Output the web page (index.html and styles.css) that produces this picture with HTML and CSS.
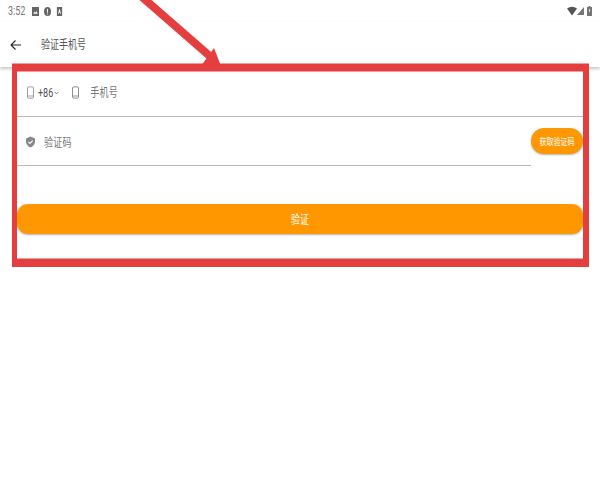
FILE: index.html
```html
<!DOCTYPE html>
<html lang="zh-CN">
<head>
  <meta charset="UTF-8">
  <meta name="viewport" content="width=device-width, initial-scale=1.0">
  <title>验证手机号</title>
  <link rel="stylesheet" href="styles.css">
</head>
<body>
  <div class="page">
    <div class="status-bar">
      <div class="status-left">
        <span class="tall time">3:52</span>
        <svg class="status-icon" viewBox="0 0 8 8" preserveAspectRatio="none"><path fill="#666" d="M0 0h8v8H0z"/><path fill="#fff" d="M1.500 6l1.500-2 1 1 1-1.500 1.500 2.500z"/></svg>
        <svg class="status-icon" viewBox="0 0 8 8" preserveAspectRatio="none"><circle cx="4" cy="4" r="4" fill="#666"/><path fill="#fff" d="M3.500 1.500h1v3.500h-1zM3.500 5.700h1v1h-1z"/></svg>
        <svg class="status-icon" viewBox="0 0 8 8" preserveAspectRatio="none"><path fill="#666" d="M1 0h6v8H1z"/><path fill="#fff" d="M3.500 2h1l1 4h-.8l-.2-1h-1l-.2 1h-.8z"/></svg>
      </div>
      <div class="status-right">
        <svg class="wifi" viewBox="0 0 10 10"><path fill="#555" d="M0 2.500Q5-1 10 2.500L5 9.500z"/></svg>
        <svg class="signal" viewBox="0 0 7 8"><path fill="#777" d="M7 0v8H0z"/></svg>
        <svg class="battery" viewBox="0 0 5 10"><path fill="#777" d="M1.500 0h2v1H5v9H0V1h1.500z"/><path fill="#ddd" d="M2 3h1v3H2z"/></svg>
      </div>
    </div>

    <div class="app-bar">
      <svg class="back" viewBox="0 0 12 12"><path fill="none" stroke="#222" stroke-width="1.100" d="M11 6H1.500M5.500 1.500L1 6l4.500 4.500"/></svg>
      <span class="tall title">验证手机号</span>
    </div>

    <div class="form">
      <div class="phone-row">
        <svg class="phone-icon" viewBox="0 0 8 14"><rect x=".6" y=".6" width="6.800" height="12.800" rx="1.200" fill="none" stroke="#999" stroke-width="1.100"/><path stroke="#999" d="M1 11h6"/></svg>
        <span class="tall code">+86</span>
        <svg class="caret" viewBox="0 0 6 4"><path fill="none" stroke="#555" stroke-width=".9" d="M.7.7L3 3l2.300-2.300"/></svg>
        <svg class="phone-icon second" viewBox="0 0 8 14"><rect x=".6" y=".6" width="6.800" height="12.800" rx="1.200" fill="none" stroke="#888" stroke-width="1.100"/><path stroke="#888" d="M1 11h6"/></svg>
        <span class="tall hint">手机号</span>
      </div>

      <div class="code-row">
        <div class="code-field">
          <svg class="shield" viewBox="0 0 10 12"><path fill="#888" d="M5 0l5 2v3.500C10 8.500 8 11 5 12 2 11 0 8.500 0 5.500V2z"/><path fill="none" stroke="#fff" stroke-width="1.200" d="M2.800 6l1.600 1.600 3-3"/></svg>
          <span class="tall hint">验证码</span>
        </div>
        <button class="send-code"><span class="tall">获取验证码</span></button>
      </div>

      <button class="submit"><span class="tall">验证</span></button>
    </div>

    <svg class="callout" viewBox="0 0 600 500">
      <path fill="none" stroke="#e53e3e" stroke-width="8" d="M142-3L212 58"/>
      <path fill="#e53e3e" d="M214 48l7 18h-20z"/>
      <path fill="#e53e3e" fill-rule="evenodd" d="M12 63.500H589V267H12zM17 71.500V258.500H583V71.500z"/>
    </svg>
  </div>
</body>
</html>
```

FILE: styles.css
```css
body {
  margin: 0;
  background-color: #fff;
  font-family: "Noto Sans CJK SC", "Liberation Sans", sans-serif;
}

.page {
  position: relative;
  width: 600px;
  height: 500px;
  overflow: hidden;
}

.tall {
  display: inline-block;
  transform: scaleY(1.35);
}

.status-bar {
  height: 22px;
  display: flex;
  justify-content: space-between;
  align-items: center;
  padding: 0 8px;
}

.status-left,
.status-right {
  display: flex;
  align-items: center;
}

.time {
  font-family: "Roboto", sans-serif;
  font-size: 9px;
  color: #777;
  margin-right: 7px;
}

.status-icon {
  width: 7px;
  height: 9px;
  margin-right: 5px;
}

.wifi {
  width: 10px;
  height: 10px;
}

.signal {
  width: 7px;
  height: 8px;
  margin-right: 3px;
}

.battery {
  width: 5px;
  height: 10px;
}

.app-bar {
  height: 45px;
  display: flex;
  align-items: center;
  padding-left: 10px;
  box-shadow: 0 2px 3px rgba(0, 0, 0, 0.22);
}

.back {
  width: 12px;
  height: 12px;
  margin-right: 19px;
}

.title {
  font-size: 9px;
  color: #555;
}

.form {
  padding: 0 17px;
}

.phone-row {
  height: 50px;
  display: flex;
  align-items: center;
  border-bottom: 1px solid #bbb;
  padding: 2px 0 0 10px;
  box-sizing: border-box;
}

.phone-icon {
  width: 7px;
  height: 13px;
}

.phone-icon.second {
  margin: 0 11px 0 13px;
}

.code {
  font-family: "Roboto", sans-serif;
  font-size: 9px;
  color: #555;
  margin-left: 4px;
}

.caret {
  width: 5px;
  height: 4px;
  margin-left: 1px;
}

.hint {
  font-size: 9px;
  color: #777;
  letter-spacing: 0.2px;
}

.code-row {
  display: flex;
  align-items: center;
}

.code-field {
  flex: 1;
  height: 49px;
  display: flex;
  align-items: center;
  border-bottom: 1px solid #bbb;
  padding: 3px 0 0 9px;
  box-sizing: border-box;
}

.shield {
  width: 9px;
  height: 12px;
  margin: 0 9px 2px 0;
}

.send-code {
  width: 52px;
  height: 26px;
  margin-bottom: 1px;
  padding: 0;
  border: none;
  border-radius: 13px;
  background-color: #ff9800;
  color: #fff;
  font-family: inherit;
  font-size: 7px;
  box-shadow: 0 1px 2px rgba(0, 0, 0, 0.3);
}

.submit {
  display: block;
  width: 100%;
  height: 30px;
  margin-top: 38px;
  padding: 0;
  border: none;
  border-radius: 11px;
  background-color: #ff9800;
  color: #fff;
  font-family: inherit;
  font-size: 9px;
  box-shadow: 0 1px 2px rgba(0, 0, 0, 0.3);
}

.callout {
  position: absolute;
  top: 0;
  left: 0;
  width: 600px;
  height: 500px;
}
```
